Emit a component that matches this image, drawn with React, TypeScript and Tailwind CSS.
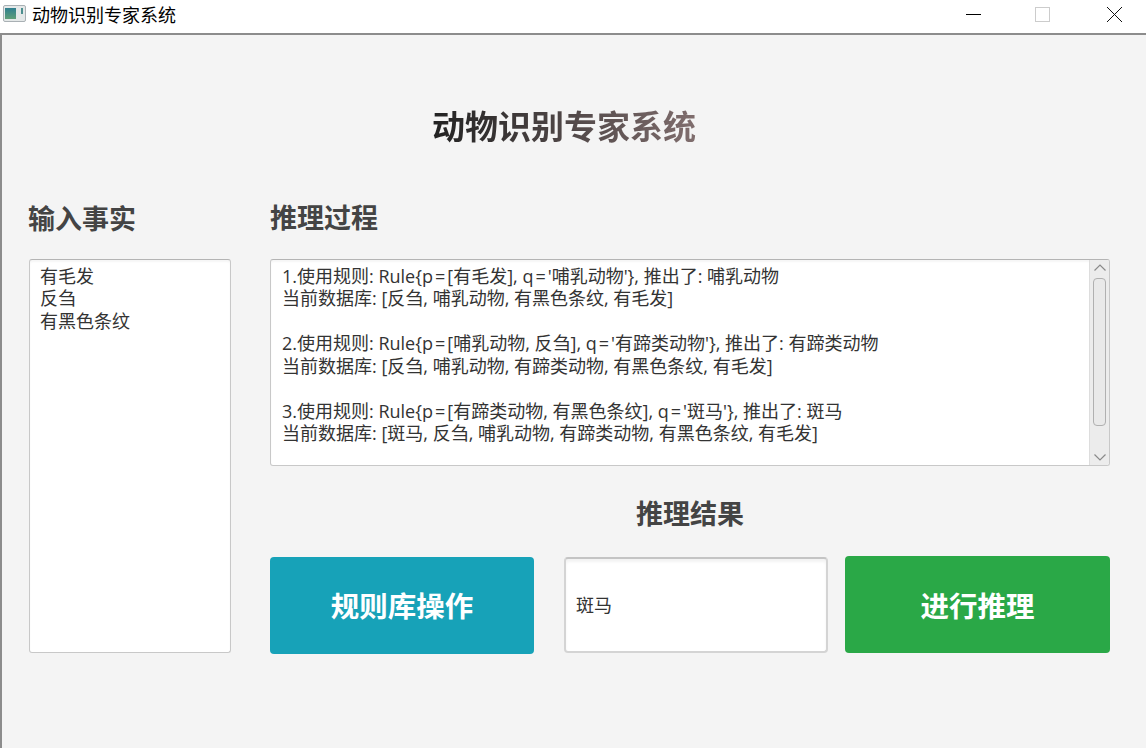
import React from "react";

const lines = [
  "1.使用规则: Rule{p=[有毛发], q='哺乳动物'}, 推出了: 哺乳动物",
  "当前数据库: [反刍, 哺乳动物, 有黑色条纹, 有毛发]",
  "",
  "2.使用规则: Rule{p=[哺乳动物, 反刍], q='有蹄类动物'}, 推出了: 有蹄类动物",
  "当前数据库: [反刍, 哺乳动物, 有蹄类动物, 有黑色条纹, 有毛发]",
  "",
  "3.使用规则: Rule{p=[有蹄类动物, 有黑色条纹], q='斑马'}, 推出了: 斑马",
  "当前数据库: [斑马, 反刍, 哺乳动物, 有蹄类动物, 有黑色条纹, 有毛发]",
];

function Line({ text }: { text: string }) {
  const parts = text.split("=");
  return (
    <div className="h-[22.5px]">
      {parts.map((p, i) => (
        <React.Fragment key={i}>
          {i > 0 && <span className="mx-[2px]">=</span>}
          {p}
        </React.Fragment>
      ))}
    </div>
  );
}

export default function App() {
  return (
    <div className="w-[1146px] h-[748px] overflow-hidden flex flex-col bg-[#f4f4f4] font-['Open_Sans','Noto_Sans_CJK_SC',sans-serif] text-[#333333]">
      <div className="h-[33px] shrink-0 bg-white flex items-center text-black">
        <svg width="24" height="18" viewBox="0 0 24 18" className="ml-[3px] -mt-[5px]">
          <rect x="0.5" y="0.5" width="22" height="16" rx="1.5" fill="#e4e8e8" stroke="#a9b0b4" />
          <defs>
            <linearGradient id="ic" x1="0" y1="0" x2="0" y2="1">
              <stop offset="0" stopColor="#2f7f8f" />
              <stop offset="1" stopColor="#5f9f78" />
            </linearGradient>
          </defs>
          <rect x="2" y="3" width="11" height="11" fill="url(#ic)" />
          <rect x="18" y="3" width="2" height="6" fill="#4d8f8f" />
        </svg>
        <span className="ml-[5px] text-[18px] leading-[24px] -mt-[5px] font-['Noto_Sans_CJK_SC',sans-serif]">动物识别专家系统</span>
        <div className="ml-auto flex items-center h-full">
          <svg width="16" height="16" viewBox="0 0 16 16" className="mr-[53px] -mt-[5px]">
            <path d="M0 8.5H15" stroke="#000" strokeWidth="1" />
          </svg>
          <div className="w-[15px] h-[15px] border border-[#cccccc] mr-[56px] -mt-[5px]" />
          <svg width="17" height="17" viewBox="0 0 17 17" className="mr-[23px] -mt-[5px]">
            <path d="M1 1L16 16M16 1L1 16" stroke="#111" strokeWidth="1" />
          </svg>
        </div>
      </div>
      <div className="flex-1 min-h-0 border-t-2 border-l-2 border-[#8c8c8c] flex flex-col pl-[27px] pr-[35px]">
        <h1 className="mt-[68px] h-[48px] pr-[12px] flex justify-center items-center text-[33px] font-bold">
          <span className="bg-gradient-to-r from-[#222222] to-[#806e6e] bg-clip-text text-transparent leading-[48px]">动物识别专家系统</span>
        </h1>
        <div className="mt-[48px] flex gap-[39px]">
          <div className="w-[202px] shrink-0 flex flex-col">
            <h2 className="-ml-[1px] text-[27px] leading-[40px] font-bold text-[#444444] h-[40px]">输入事实</h2>
            <div className="mt-[20px] h-[394px] bg-white rounded-[3px] border border-[#c8c8c8] border-t-[#b4b4b4] shadow-[inset_0_2px_2px_rgba(0,0,0,0.04)] pl-[10px] pt-[4.6px] text-[18px] leading-[22.5px]">
              <div>有毛发</div>
              <div>反刍</div>
              <div>有黑色条纹</div>
            </div>
          </div>
          <div className="w-[840px] shrink-0 flex flex-col">
            <h2 className="text-[27px] leading-[40px] font-bold text-[#444444] h-[40px] -mt-[1px]">推理过程</h2>
            <div className="mt-[21px] h-[207px] bg-white rounded-[3px] border border-[#c8c8c8] border-t-[#b4b4b4] shadow-[inset_0_2px_2px_rgba(0,0,0,0.04)] flex overflow-hidden">
              <div className="flex-1 pl-[11px] pt-[4.6px] text-[18px] leading-[22.5px] whitespace-pre">
                {lines.map((l, i) => (
                  <Line key={i} text={l} />
                ))}
              </div>
              <div className="w-[20px] shrink-0 bg-[#ececec] border-l border-[#dddddd] flex flex-col items-center pt-[3px]">
                <svg width="14" height="9" viewBox="0 0 14 9"><path d="M1.5 7.5L7 2L12.5 7.5" fill="none" stroke="#8a8a8a" strokeWidth="1.2" /></svg>
                <div className="w-[13px] h-[148px] mt-[6px] rounded-[4px] border border-[#b0b0b0] bg-[#e9e9e9]" />
                <svg width="14" height="9" viewBox="0 0 14 9" className="mt-[27px]"><path d="M1.5 1.5L7 7L12.5 1.5" fill="none" stroke="#8a8a8a" strokeWidth="1.2" /></svg>
              </div>
            </div>
            <h2 className="mt-[28px] h-[40px] text-center text-[27px] leading-[40px] font-bold text-[#444444]">推理结果</h2>
            <div className="mt-[23px] flex h-[97px]">
              <button className="w-[264px] h-[97px] pt-[2px] rounded-[4px] bg-[#17a2b8] text-white text-[28.5px] font-bold">规则库操作</button>
              <div className="ml-[30px] w-[264px] h-[96px] rounded-[4px] bg-white border-2 border-[#d4d4d4] border-t-[#c4c4c4] flex items-center pl-[10px] text-[18px] shadow-[inset_0_3px_3px_rgba(0,0,0,0.05)]">斑马</div>
              <button className="ml-[17px] w-[265px] h-[97px] -mt-[1px] pt-[4px] rounded-[4px] bg-[#2aa847] text-white text-[28.5px] font-bold">进行推理</button>
            </div>
          </div>
        </div>
      </div>
    </div>
  );
}
